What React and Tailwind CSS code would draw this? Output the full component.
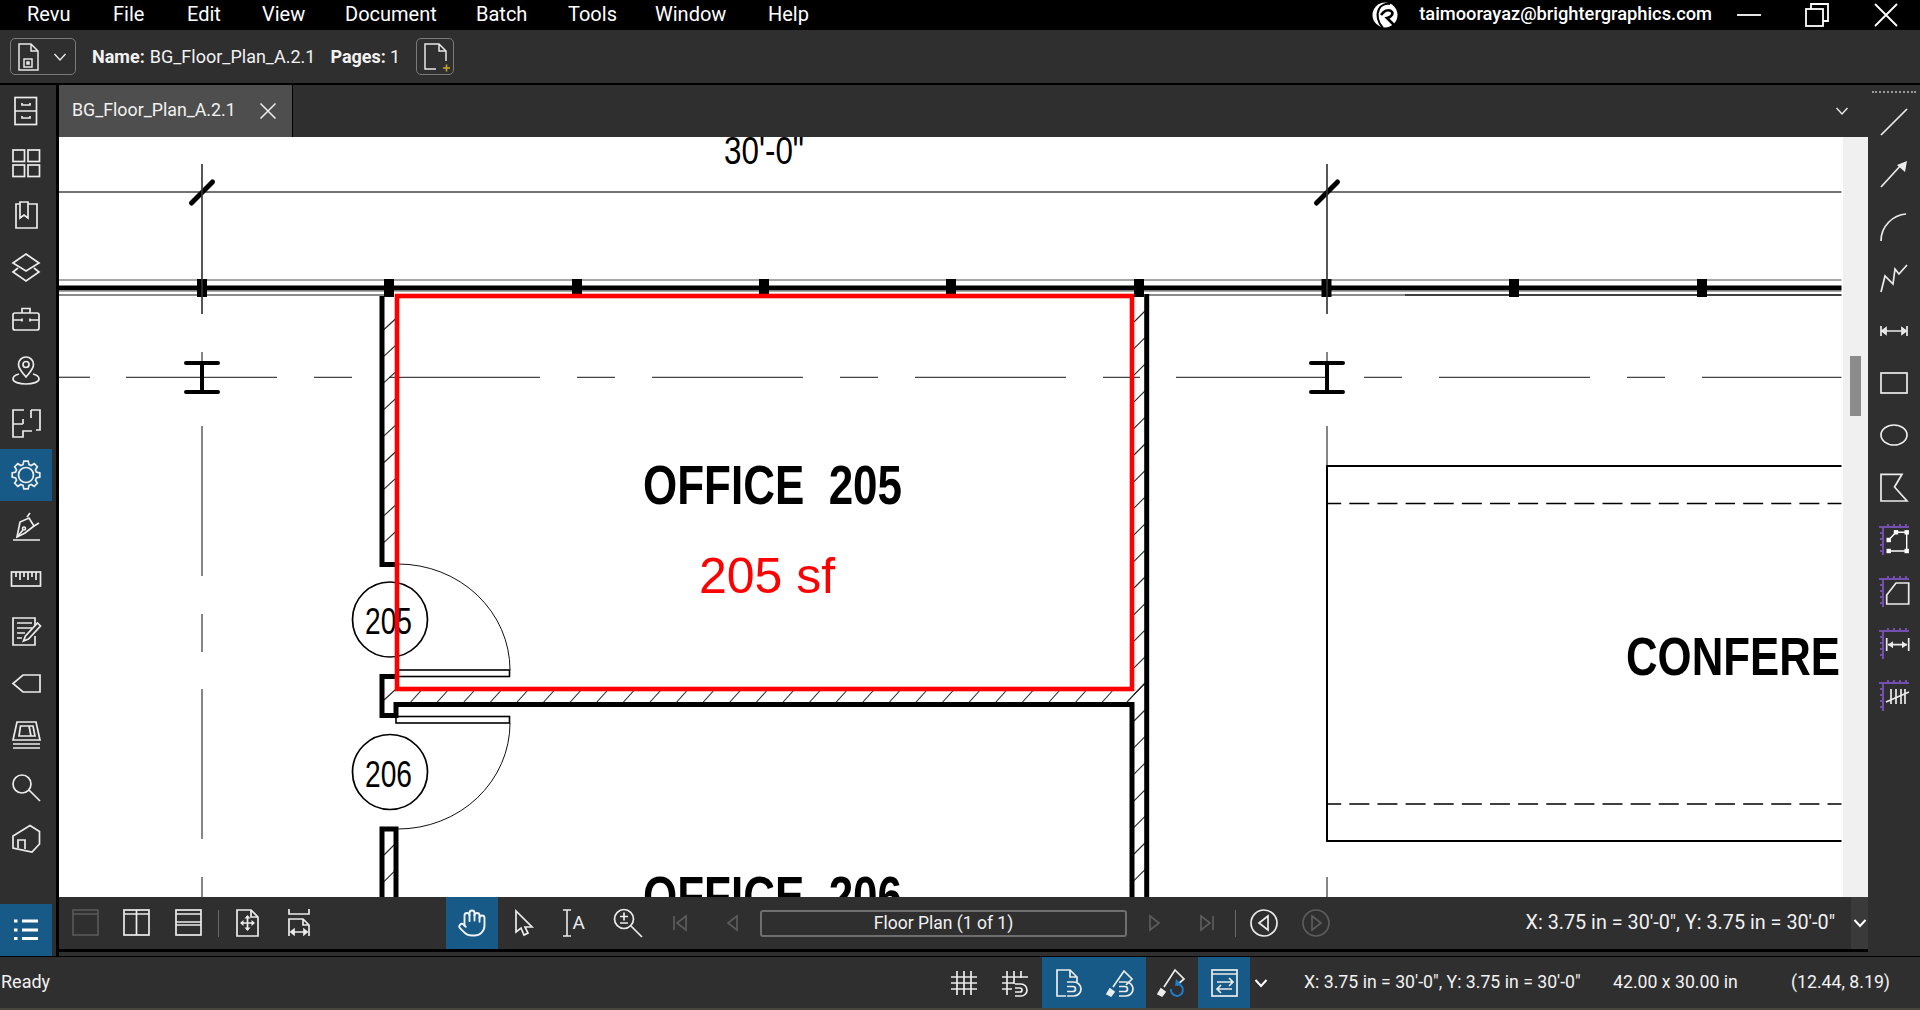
import React from "react";
import { Hand } from "lucide-react";

const gear = (cx, cy, ro, ri, n) => {
  let d = "";
  const step = (Math.PI * 2) / n;
  for (let i = 0; i < n; i++) {
    const a = i * step - Math.PI / 2;
    const pts = [
      [ri, a - step * 0.36],
      [ro, a - step * 0.2],
      [ro, a + step * 0.2],
      [ri, a + step * 0.36],
    ];
    pts.forEach(([r, t], j) => {
      const x = (cx + r * Math.cos(t)).toFixed(2);
      const y = (cy + r * Math.sin(t)).toFixed(2);
      d += (i === 0 && j === 0 ? "M" : "L") + x + " " + y + " ";
    });
  }
  return d + "Z";
};

const I = ({ children, c = "#ececec", s = 1.7 }) => (
  <svg width="32" height="32" viewBox="0 0 32 32" fill="none" stroke={c} strokeWidth={s} className="shrink-0">
    {children}
  </svg>
);

const leftIcons = [
  <I key="a"><rect x="5" y="2.500" width="21.500" height="27" /><path d="M5 16H26.500M12 8v2h8V8M12 21v2h8v-2" /></I>,
  <I key="b"><rect x="3" y="3" width="11.500" height="11.500" /><rect x="18" y="3" width="11.500" height="11.500" /><rect x="3" y="18" width="11.500" height="11.500" /><rect x="18" y="18" width="11.500" height="11.500" /></I>,
  <I key="c"><path d="M10 5H6v24h21V5h-9" /><path d="M10 3h8v16l-4-3-4 3z" /></I>,
  <I key="d"><path d="M16 3l13 9-13 8-13-8z" /><path d="M8 17l-5 4 13 9 13-9-5-4" /></I>,
  <I key="e"><rect x="3" y="10" width="26" height="17" rx="2" /><path d="M12 10V5.500h8V10M3 17h9M20 17h9M12 15.500v3M20 15.500v3" /></I>,
  <I key="f"><path d="M16 22C12 17 8.500 14 8.500 9.500a7.500 7.500 0 0 1 15 0C23.500 14 20 17 16 22z" /><circle cx="16" cy="9.500" r="3" /><path d="M9 19c-4 1-6 3-6 5 0 3 6 5 13 5s13-2 13-5c0-2-2-4-6-5" /></I>,
  <I key="g"><path d="M14 3H3v27h10v-6h9M3 17h10M13 12v5M21 3h9v20h-4M21 3v8" /></I>,
  <I key="h"><path d={gear(16, 16, 14, 10.8, 8)} /><circle cx="16" cy="16" r="7.500" /></I>,
  <I key="i"><path d="M7 26l3-15 9-4 5 8-9 7z" /><path d="M7 26l6-7" /><circle cx="14" cy="17.500" r="1.500" /><path d="M17 6l3-4M24 15l5-3M3 29h27" /></I>,
  <I key="j"><rect x="1.500" y="9" width="29" height="14" /><path d="M6 9v5M10 9v8M14 9v5M18 9v8M22 9v5M26 9v8" /></I>,
  <I key="k"><path d="M25 11V3H3v27h22v-9" /><path d="M7 8h15M7 13h15M7 18h8M7 23h5" /><path d="M27.500 8l3 3-12 13-5 2 2-5z" /></I>,
  <I key="l"><path d="M30 8H13L3 16.500 13 25h17z" /></I>,
  <I key="m"><path d="M3 21L7 3h19l4 18z" /><path d="M9 17l1.500-10H23l2 10zM19 7l2 10" /><path d="M3 25h27M3 29h27" /></I>,
  <I key="n"><circle cx="12" cy="13" r="9" /><path d="M19 19l11 11" /></I>,
  <I key="o"><path d="M3 13L20 2.500l9.500 6V21L22 29 3 25z" /><path d="M8 25v-8h7v9" /></I>,
];

const Ruler = ({ y = 4 }) => (
  <g stroke="#7350b0" strokeWidth="2">
    <path d={`M1 ${y}H31M5 ${y}V33`} />
    <path d={`M10 ${y - 3}v3M16 ${y - 3}v3M22 ${y - 3}v3M28 ${y - 3}v3M2 ${y + 6}h3M2 ${y + 12}h3M2 ${y + 18}h3M2 ${y + 24}h3`} />
  </g>
);

const Sq = ({ x, y }) => <rect x={x - 2.2} y={y - 2.2} width="4.400" height="4.400" fill="#fff" stroke="none" />;

const rightIcons = [
  <I key="a"><path d="M3 28L29 2" /></I>,
  <I key="b"><path d="M3 28l21-23" /><path d="M29 2l-2 11-8-7z" fill="#ececec" stroke="none" /></I>,
  <I key="c"><path d="M3 30C3 15 15 4 28 3" /></I>,
  <I key="d"><path d="M3 29l4-16 8 8 2-15 4 5 8-9" /></I>,
  <I key="e"><path d="M3 11v10M29 11v10M4 16h24M4 16l4-3v6zM28 16l-4-3v6z" /></I>,
  <I key="f"><rect x="3" y="6" width="26" height="20" /></I>,
  <I key="g"><ellipse cx="16" cy="16" rx="13" ry="10" /></I>,
  <I key="h"><path d="M3 3.300h21L16.500 16 29 30H3z" /></I>,
  <I key="i"><Ruler /><path d="M10.700 17L18 9.300h10.700V28h-18" strokeWidth="1.400" stroke="#fff" /><Sq x={10.7} y={17} /><Sq x={18} y={9.3} /><Sq x={28.7} y={9.3} /><Sq x={28.7} y={28} /><Sq x={10.7} y={28} /></I>,
  <I key="j"><Ruler /><path d="M8.700 29v-9L18 8h12.700v21z" /></I>,
  <I key="k"><Ruler /><path d="M8.700 11v13M30.700 11v13M10 17.700h19" /><path d="M10 17.700l5-3.500v7zM29 17.700l-5-3.500v7z" fill="#ececec" stroke="none" /></I>,
  <I key="l"><Ruler /><path d="M13 10v15M18 10v15M23 10v15M27 10v15M8 23L31 13" /></I>,
];

const Btn = ({ w = "w-[52px]", active, children }) => (
  <div className={`${w} h-full shrink-0 flex items-center justify-center ${active ? "bg-[#185a87]" : ""}`}>{children}</div>
);

const Chevron = ({ c = "#e8e8e8", s = 1.4 }) => (
  <svg width="14" height="10" viewBox="0 0 14 10" fill="none" stroke={c} strokeWidth={s}>
    <path d="M1.500 2l5.500 6 5.500-6" />
  </svg>
);

const GRAY = "#5c5c5c";
const END = 1841.5;

const Plan = () => {
  const squares = [202, 389, 577, 764, 951, 1139, 1326.5, 1514, 1702];
  const longs = [[59, 90], [126, 277], [314, 352], [389, 540], [577, 615], [652, 803], [840, 878], [915, 1066], [1103, 1140], [1176, 1327], [1364, 1402], [1439, 1590], [1627, 1665], [1702, END]];
  const vert = [[164, 314], [352, 394], [426, 576], [614, 652], [689, 839], [877, 897]];
  const leftHatch = [];
  for (let y = 329.5; y < 560; y += 26.6) leftHatch.push(y);
  const rightHatch = [];
  for (let y = 322; y < 900; y += 26.6) rightHatch.push(y);
  const botHatch = [];
  for (let x = 410.7; x < 1120; x += 26.6) botHatch.push(x);
  const low = [];
  for (let y = 855; y < 900; y += 26.6) low.push(y);
  const Beam = ({ x }) => (
    <g>
      <path d={`M${x} 164V314`} stroke="#333" strokeWidth="1.300" />
      <path d={`M${x - 10.500} 203L${x + 10.500} 182`} stroke="#000" strokeWidth="5" strokeLinecap="round" />
    </g>
  );
  const IBeam = ({ x }) => (
    <path d={`M${x - 16} 363H${x + 16}M${x - 16} 392H${x + 16}M${x} 363V392`} stroke="#000" strokeWidth="4" strokeLinecap="round" />
  );
  return (
    <svg viewBox="59 137 1784 760" width="1784" height="760" className="block shrink-0 bg-white" fill="none">
      <path d={`M59 192H${END}`} stroke="#444" strokeWidth="1.500" />
      <Beam x={202} />
      <Beam x={1327} />
      <text x="724" y="163.500" fontSize="39" fill="#000" stroke="none" textLength="80" lengthAdjust="spacingAndGlyphs" className="[font-family:'Liberation_Sans',sans-serif]">30'-0"</text>
      <path d={`M59 280H${END}`} stroke="#888" strokeWidth="1.300" />
      <path d={`M59 288H${END}`} stroke="#000" strokeWidth="5" />
      <path d={`M59 291.500H${END}`} stroke="#aaa" strokeWidth="1" />
      <path d="M59 295H384M1149 295H1405" stroke="#666" strokeWidth="1.500" />
      <path d={`M1405 295H${END}`} stroke="#000" strokeWidth="1.500" />
      {squares.map((x) => (
        <rect key={x} x={x - 5} y="279" width="10" height="18" fill="#000" />
      ))}
      {longs.map(([a, b]) => (
        <path key={a} d={`M${a} 377.300H${b}`} stroke="#444" strokeWidth="1.300" />
      ))}
      {vert.map(([a, b]) => (
        <g key={a}>
          <path d={`M202 ${a}V${b}`} stroke="#444" strokeWidth="1.300" />
          {a !== 689 && a !== 614 && <path d={`M1327 ${a}V${a === 426 ? 466 : b}`} stroke="#444" strokeWidth="1.300" />}
        </g>
      ))}
      <IBeam x={202} />
      <IBeam x={1327} />
      <g stroke="#222" strokeWidth="1.100">
        {leftHatch.map((y) => (
          <path key={y} d={`M384 ${y}L397 ${y - 12}`} />
        ))}
        {rightHatch.map((y) => (
          <path key={y} d={`M1134 ${y}L1145 ${y - 11}`} />
        ))}
        {botHatch.map((x) => (
          <path key={x} d={`M${x} 702L${x + 10} 691`} />
        ))}
        <path d="M384 700L395 690M1127 702L1145 683" />
        {low.map((y) => (
          <path key={y} d={`M384 ${y}L394 ${y - 10}`} />
        ))}
      </g>
      <g stroke="#000" strokeWidth="5" strokeLinejoin="miter">
        <path d="M382 296V564.500H397" />
        <path d="M397 676.500H382V715.500H396V704.500H1132V897" />
        <path d="M382 897V829H396V897" />
        <path d="M1146.700 294V897" />
      </g>
      <rect x="397" y="670" width="112.500" height="6.500" stroke="#000" strokeWidth="1.600" />
      <rect x="396" y="716.500" width="113.500" height="6.500" stroke="#000" strokeWidth="1.600" />
      <path d="M398 564A112 106 0 0 1 510 670M510 723A112 106 0 0 1 398 829" stroke="#111" strokeWidth="1" />
      <circle cx="390" cy="619.500" r="37.500" stroke="#000" strokeWidth="1.700" />
      <circle cx="390" cy="772" r="37.500" stroke="#000" strokeWidth="1.700" />
      <text x="365" y="633.500" fontSize="36" fill="#000" stroke="none" textLength="47" lengthAdjust="spacingAndGlyphs" className="[font-family:'Liberation_Sans',sans-serif]">205</text>
      <text x="365" y="787" fontSize="36" fill="#000" stroke="none" textLength="47" lengthAdjust="spacingAndGlyphs" className="[font-family:'Liberation_Sans',sans-serif]">206</text>
      <path d={`M${END} 466H1327V841H${END}`} stroke="#000" strokeWidth="2" />
      <path d={`M1327 503.400H${END}M1327 804H${END}`} stroke="#000" strokeWidth="1.500" strokeDasharray="20 8.130" strokeDashoffset="5.800" />
      <text x="643" y="503.500" fontSize="56" fontWeight="700" fill="#000" stroke="none" textLength="259" lengthAdjust="spacingAndGlyphs" className="whitespace-pre [font-family:'Liberation_Sans',sans-serif]">OFFICE  205</text>
      <text x="643" y="914.500" fontSize="56" fontWeight="700" fill="#000" stroke="none" textLength="259" lengthAdjust="spacingAndGlyphs" className="whitespace-pre [font-family:'Liberation_Sans',sans-serif]">OFFICE  206</text>
      <text x="1626" y="675" fontSize="54" fontWeight="700" fill="#000" stroke="none" textLength="214" lengthAdjust="spacingAndGlyphs" className="[font-family:'Liberation_Sans',sans-serif]">CONFERE</text>
      <text x="699" y="593" fontSize="50" fill="#ff0000" stroke="none" className="[font-family:'Liberation_Sans',sans-serif]">205 sf</text>
      <rect x="397" y="296" width="735" height="393" stroke="#ff0000" strokeWidth="4.600" />
    </svg>
  );
};

export default function App() {
  const menus = [
    ["Revu", "w-[86px]"],
    ["File", "w-[74px]"],
    ["Edit", "w-[75px]"],
    ["View", "w-[83px]"],
    ["Document", "w-[131px]"],
    ["Batch", "w-[92px]"],
    ["Tools", "w-[87px]"],
    ["Window", "w-[113px]"],
    ["Help", "w-[60px]"],
  ];
  return (
    <div className="w-[1920px] h-[1010px] overflow-hidden flex flex-col bg-[#2f2f2f] text-[#f2f2f2] [font-family:Roboto,sans-serif]">
      <div className="h-[30px] shrink-0 bg-black text-white flex items-center text-[20px] pl-[27px]">
        <div className="flex flex-1 pb-[2px]">
          {menus.map(([m, w]) => (
            <span key={m} className={`${w} shrink-0`}>{m}</span>
          ))}
        </div>
        <svg width="28" height="28" viewBox="0 0 28 28" className="shrink-0">
          <circle cx="14" cy="14" r="12.500" fill="#fff" />
          <path d="M12 27C7 22 5 14 8 8c2-4 7-6 11-5" fill="none" stroke="#000" strokeWidth="2" />
          <path d="M10 14c3-4 7-6 10-4 3 2 1 6-4 7l7 7" fill="none" stroke="#000" strokeWidth="2.600" />
        </svg>
        <span className="ml-[20px] pb-[2px] font-medium text-[18.3px]">taimoorayaz@brightergraphics.com</span>
        <svg width="24" height="4" viewBox="0 0 24 4" className="ml-[25px] shrink-0">
          <path d="M0 2H24" stroke="#fff" strokeWidth="1.800" />
        </svg>
        <svg width="24" height="24" viewBox="0 0 24 24" fill="none" stroke="#fff" strokeWidth="1.800" className="ml-[44px] shrink-0">
          <rect x="1" y="6" width="17" height="17" />
          <path d="M6 6V1h17v17h-5" />
        </svg>
        <svg width="24" height="24" viewBox="0 0 24 24" fill="none" stroke="#fff" strokeWidth="1.800" className="ml-[45px] mr-[22px] shrink-0">
          <path d="M1 1L23 23M23 1L1 23" />
        </svg>
      </div>

      <div className="h-[55px] shrink-0 border-b-2 border-black flex items-center pl-[10px] text-[18px]">
        <div className="w-[66px] h-[37px] rounded-[5px] border border-[#7a7a7a] flex items-center justify-between pl-[3px] pr-[8px] shrink-0">
          <svg width="28" height="30" viewBox="0 0 28 30" fill="none" stroke="#e8e8e8" strokeWidth="1.500">
            <path d="M5 2h12l7 7v19H5zM17 2v7h7" />
            <rect x="10" y="17" width="8" height="8" />
            <rect x="13" y="20" width="2" height="2" fill="#e8e8e8" />
          </svg>
          <Chevron />
        </div>
        <span className="ml-[16px] font-bold">Name:</span>
        <span className="ml-[5px]">BG_Floor_Plan_A.2.1</span>
        <span className="ml-[15px] font-bold">Pages:</span>
        <span className="ml-[4px]">1</span>
        <div className="ml-[16px] w-[38px] h-[37px] rounded-[5px] border border-[#7a7a7a] flex items-center justify-center shrink-0">
          <svg width="32" height="32" viewBox="0 0 32 32" fill="none" stroke="#e8e8e8" strokeWidth="1.500">
            <path d="M17 28H6V3h14l7 7v10M20 3v7h7" />
            <path d="M24 27h7M27.500 23.500v7" stroke="#c9a92c" />
          </svg>
        </div>
      </div>

      <div className="flex-1 min-h-0 flex border-b border-black">
        <div className="w-[59px] shrink-0 border-r-[3px] border-black flex flex-col">
          {leftIcons.map((ic, i) => (
            <div key={i} className={`h-[52px] w-[52px] shrink-0 flex items-center justify-center ${i === 7 ? "bg-[#185a87]" : ""}`}>
              {ic}
            </div>
          ))}
          <div className="flex-1" />
          <div className="h-[52px] w-[52px] shrink-0 bg-[#185a87] flex items-center justify-center">
            <svg width="32" height="32" viewBox="0 0 32 32" fill="#fff">
              <rect x="4" y="5.500" width="3.500" height="3" />
              <rect x="4" y="14.500" width="3.500" height="3" />
              <rect x="4" y="23" width="3.500" height="3" />
              <rect x="12" y="5.500" width="16" height="3" />
              <rect x="12" y="14.500" width="16" height="3" />
              <rect x="12" y="23" width="16" height="3" />
            </svg>
          </div>
        </div>

        <div className="flex-1 min-w-0 flex flex-col">
          <div className="h-[52px] shrink-0 flex items-center">
            <div className="w-[234px] h-full bg-[#4e4e4e] border-r border-black flex items-center pl-[13px] text-[17.800px] shrink-0">
              <span className="pb-[2px]">BG_Floor_Plan_A.2.1</span>
              <svg width="18" height="18" viewBox="0 0 18 18" fill="none" stroke="#f0f0f0" strokeWidth="1.500" className="ml-[23px]">
                <path d="M1.500 1.500l15 15M16.500 1.500l-15 15" />
              </svg>
            </div>
            <div className="flex-1" />
            <div className="mr-[19px] flex">
              <Chevron />
            </div>
          </div>

          <div className="flex-1 min-h-0 flex">
            <Plan />
            <div className="w-[25px] shrink-0 bg-[#f0f0f0] pl-[7px] pt-[219px]">
              <div className="w-[11px] h-[60px] bg-[#8b8b8b]" />
            </div>
          </div>

          <div className="h-[52px] shrink-0 flex items-center text-[19.800px]">
            <Btn w="w-[51px]"><I c={GRAY} s={1.5}><rect x="4" y="3" width="25" height="25" /><path d="M4 7h25" /></I></Btn>
            <Btn><I><rect x="4" y="3" width="25" height="25" /><path d="M4 7h25M16.500 3v25" /></I></Btn>
            <Btn><I><rect x="4" y="3" width="25" height="25" /><path d="M4 7h25M4 15h25M4 18h25" /></I></Btn>
            <div className="ml-[4px] w-px h-[27px] bg-[#6a6a6a] shrink-0" />
            <div className="ml-[2px] shrink-0 h-full"><Btn><I><path d="M6 3h14l7 7v19H6zM20 3v7h7" /><path d="M16.500 9v14M10 16h13" /><path d="M16.500 8l-3 3.500h6zM16.500 24l-3-3.500h6zM9 16l3.500-3v6zM24 16l-3.500-3v6z" fill="#ececec" stroke="none" /></I></Btn></div>
            <Btn><I><path d="M6 2v5h20V2" /><path d="M6 29V12h14l6 6v11M20 12v6h6" /><path d="M8 25h16M8 25l3-2.500v5zM24 25l-3-2.500v5z" /></I></Btn>
            <div className="w-[121px] shrink-0" />
            <Btn active><Hand size={30} strokeWidth={1.500} color="#eef3f7" /></Btn>
            <Btn><I><path d="M8 4v21l5-4 3 7 4-2-3-6h7z" /></I></Btn>
            <Btn>
              <svg width="32" height="32" viewBox="0 0 32 32" fill="none" stroke="#ececec" strokeWidth="1.600">
                <path d="M3 3h8M3 29h8M7 3v26" />
                <text x="12.500" y="22" fontSize="19" fill="#ececec" stroke="none" className="[font-family:Roboto,sans-serif]">A</text>
              </svg>
            </Btn>
            <Btn><I><circle cx="12" cy="12" r="9.500" /><path d="M19 19l11 11M8 9.500h8M12 5.500v8M8 16h8" /></I></Btn>
            <Btn><I c={GRAY}><path d="M10 9v14M22 9l-9 7 9 7z" /></I></Btn>
            <Btn><I c={GRAY}><path d="M21 9l-9 7 9 7z" /></I></Btn>
            <div className="ml-[2px] w-[367px] h-[27px] shrink-0 rounded-[3px] border-2 border-[#6f6f6f] flex items-center justify-center text-[17.500px]">
              Floor Plan (1 of 1)
            </div>
            <div className="ml-[2px] h-full"><Btn><I c={GRAY}><path d="M11 9l9 7-9 7z" /></I></Btn></div>
            <Btn><I c={GRAY}><path d="M22 9v14M10 9l9 7-9 7z" /></I></Btn>
            <div className="ml-[2px] w-px h-[27px] bg-[#6a6a6a] shrink-0" />
            <div className="ml-[2px] h-full"><Btn><I><circle cx="16" cy="16" r="13" /><path d="M20 9l-9 7 9 7z" /></I></Btn></div>
            <Btn><I c={GRAY}><circle cx="16" cy="16" r="13" /><path d="M12 9l9 7-9 7z" /></I></Btn>
            <div className="flex-1 text-right pr-[16px] whitespace-nowrap">X: 3.75 in = 30'-0", Y: 3.75 in = 30'-0"</div>
            <div className="w-[17px] h-full shrink-0 bg-[#3a3a3a] flex items-center justify-center">
              <Chevron c="#fff" s={2} />
            </div>
          </div>
          <div className="h-[3px] shrink-0 bg-black" />
          <div className="h-[4px] shrink-0" />
        </div>

        <div className="w-[52px] shrink-0 flex flex-col pt-[6px]">
          <div className="h-[2px] mx-[4px] border-t-2 border-dotted border-[#9a9a9a] shrink-0" />
          <div className="h-[4px] shrink-0" />
          {rightIcons.map((ic, i) => (
            <div key={i} className="h-[52px] shrink-0 flex items-center justify-center">
              {ic}
            </div>
          ))}
        </div>
      </div>

      <div className="h-[51px] shrink-0 flex items-center text-[17.700px]">
        <div className="w-[938px] pl-px pb-[2px] shrink-0 text-[18px]">Ready</div>
        <Btn><I><path d="M9 4v24M16 4v24M23 4v24M3 10h26M3 16h26M3 22h26" /></I></Btn>
        <Btn><I><path d="M7 4v24M14 4v13M21 4v7M2 10h26M2 16h12M2 22h10" /><path d="M15 17h6a6 6 0 0 1 0 12h-6M15 21h5a2 2 0 0 1 0 4h-5" /></I></Btn>
        <Btn active><I><path d="M14 29H5V3h13l7 7v5M18 3v7h7" /><path d="M15 15h7a7 7 0 0 1 0 14h-7M15 19.500h6a2.500 2.500 0 0 1 0 5h-6" /></I></Btn>
        <Btn active><I><path d="M9 20L20 4l8 8-6 6" /><path d="M3 27l3-5 4 3-3 4z" fill="#ececec" /><path d="M15 15h7a7 7 0 0 1 0 14h-7M15 19.500h6a2.500 2.500 0 0 1 0 5h-6" /></I></Btn>
        <Btn><I><path d="M8 20L19 3l9 9-7 6" /><path d="M2 27l3-5 4 3-3 4z" fill="#ececec" /><path d="M22 17a6 6 0 1 1-7 5" stroke="#1c7fd0" strokeWidth="2" /><path d="M20 12l5 5-6 2z" fill="#1c7fd0" stroke="none" /></I></Btn>
        <Btn active><I><rect x="4" y="3" width="25" height="26" /><path d="M4 7h25M9 15h16M21 11l4 4-4 4M24 22H9M13 18l-4 4 4 4" /></I></Btn>
        <div className="w-[21px] shrink-0 flex justify-center"><Chevron c="#fff" s={2} /></div>
        <div className="ml-[33px] w-[309px] shrink-0 whitespace-nowrap">X: 3.75 in = 30'-0", Y: 3.75 in = 30'-0"</div>
        <div className="w-[178px] shrink-0 whitespace-nowrap">42.00 x 30.00 in</div>
        <div className="shrink-0 whitespace-nowrap">(12.44, 8.19)</div>
      </div>
      <div className="h-[2px] shrink-0 bg-[#46463a]" />
    </div>
  );
}
